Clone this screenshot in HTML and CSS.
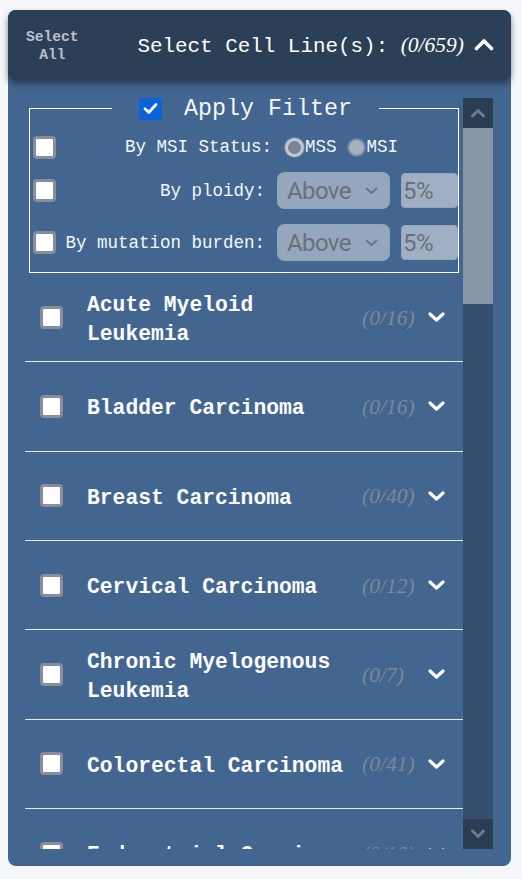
FILE: index.html
```html
<!DOCTYPE html>
<html>
<head>
<meta charset="utf-8">
<link rel="stylesheet" href="styles.css">
</head>
<body>
<div class="card">
  <div class="head">
    <div class="select-all">Select<br>All</div>
    <div class="title">Select Cell Line(s): <i class="total">(0/659)</i></div>
    <svg class="chev-up" width="20" height="14" viewBox="0 0 20 14"><path d="M2.5 11.5 L10 4 L17.5 11.5" fill="none" stroke="#fff" stroke-width="3.6" stroke-linecap="round" stroke-linejoin="round"/></svg>
  </div>
  <div class="body">
    <div class="scroller">
      <div class="content">
        <fieldset class="filter">
          <legend class="legend">
            <span class="cb checked"><svg width="17" height="17" viewBox="0 0 17 17"><path d="M3 8.8 L6.8 12.5 L14 4.5" fill="none" stroke="#fff" stroke-width="2.8" stroke-linecap="round" stroke-linejoin="round"/></svg></span>
            <span class="legend-text">Apply Filter</span>
          </legend>
          <div class="frow r1">
            <span class="cb"></span>
            <span class="flabel msi-label">By MSI Status:</span>
            <span class="controls">
              <span class="radio on"></span><span class="rtext">MSS</span>
              <span class="radio off"></span><span class="rtext">MSI</span>
            </span>
          </div>
          <div class="frow r2">
            <span class="cb"></span>
            <span class="flabel">By ploidy:</span>
            <span class="controls">
              <span class="sel">Above<svg width="13" height="8" viewBox="0 0 13 8"><path d="M1.5 1.5 L6.5 6 L11.5 1.5" fill="none" stroke="#6d7582" stroke-width="2" stroke-linecap="round" stroke-linejoin="round"/></svg></span>
              <span class="num">5%</span>
            </span>
          </div>
          <div class="frow r3">
            <span class="cb"></span>
            <span class="flabel">By mutation burden:</span>
            <span class="controls">
              <span class="sel">Above<svg width="13" height="8" viewBox="0 0 13 8"><path d="M1.5 1.5 L6.5 6 L11.5 1.5" fill="none" stroke="#6d7582" stroke-width="2" stroke-linecap="round" stroke-linejoin="round"/></svg></span>
              <span class="num">5%</span>
            </span>
          </div>
        </fieldset>

        <div class="cl-row"><span class="cb"></span><span class="name">Acute Myeloid Leukemia</span><i class="count">(0/16)</i><svg class="chev" width="17" height="12" viewBox="0 0 17 12"><path d="M2 3 L8.5 9 L15 3" fill="none" stroke="#fff" stroke-width="3.2" stroke-linecap="round" stroke-linejoin="round"/></svg></div>
        <div class="cl-row"><span class="cb"></span><span class="name">Bladder Carcinoma</span><i class="count">(0/16)</i><svg class="chev" width="17" height="12" viewBox="0 0 17 12"><path d="M2 3 L8.5 9 L15 3" fill="none" stroke="#fff" stroke-width="3.2" stroke-linecap="round" stroke-linejoin="round"/></svg></div>
        <div class="cl-row"><span class="cb"></span><span class="name">Breast Carcinoma</span><i class="count">(0/40)</i><svg class="chev" width="17" height="12" viewBox="0 0 17 12"><path d="M2 3 L8.5 9 L15 3" fill="none" stroke="#fff" stroke-width="3.2" stroke-linecap="round" stroke-linejoin="round"/></svg></div>
        <div class="cl-row"><span class="cb"></span><span class="name">Cervical Carcinoma</span><i class="count">(0/12)</i><svg class="chev" width="17" height="12" viewBox="0 0 17 12"><path d="M2 3 L8.5 9 L15 3" fill="none" stroke="#fff" stroke-width="3.2" stroke-linecap="round" stroke-linejoin="round"/></svg></div>
        <div class="cl-row"><span class="cb"></span><span class="name">Chronic Myelogenous Leukemia</span><i class="count">(0/7)</i><svg class="chev" width="17" height="12" viewBox="0 0 17 12"><path d="M2 3 L8.5 9 L15 3" fill="none" stroke="#fff" stroke-width="3.2" stroke-linecap="round" stroke-linejoin="round"/></svg></div>
        <div class="cl-row"><span class="cb"></span><span class="name">Colorectal Carcinoma</span><i class="count">(0/41)</i><svg class="chev" width="17" height="12" viewBox="0 0 17 12"><path d="M2 3 L8.5 9 L15 3" fill="none" stroke="#fff" stroke-width="3.2" stroke-linecap="round" stroke-linejoin="round"/></svg></div>
        <div class="cl-row"><span class="cb"></span><span class="name">Endometrial Carcinoma</span><i class="count">(0/10)</i><svg class="chev" width="17" height="12" viewBox="0 0 17 12"><path d="M2 3 L8.5 9 L15 3" fill="none" stroke="#fff" stroke-width="3.2" stroke-linecap="round" stroke-linejoin="round"/></svg></div>
      </div>
      <div class="scrollbar">
        <div class="sb-btn"><svg width="16" height="12" viewBox="0 0 16 12"><path d="M2.5 9 L8 3.5 L13.5 9" fill="none" stroke="#6b7d92" stroke-width="3" stroke-linecap="round" stroke-linejoin="round"/></svg></div>
        <div class="sb-thumb"></div>
        <div class="sb-track"></div>
        <div class="sb-btn"><svg width="16" height="12" viewBox="0 0 16 12"><path d="M2.5 3 L8 8.5 L13.5 3" fill="none" stroke="#6b7d92" stroke-width="3" stroke-linecap="round" stroke-linejoin="round"/></svg></div>
      </div>
    </div>
  </div>
</div>
</body>
</html>
```

FILE: styles.css
```css
* { box-sizing: border-box; }
html, body { margin: 0; padding: 0; }
body {
  background: #f5f7fa;
  font-family: "Liberation Mono", monospace;
  color: #fff;
}
.card {
  margin: 10px 0 0 8px;
  width: 503px;
  height: 856px;
  background: #436690;
  border-radius: 8px;
  display: flex;
  flex-direction: column;
}
.head {
  position: relative;
  z-index: 2;
  height: 70px;
  flex: none;
  background: #2b3f56;
  border-radius: 8px;
  box-shadow: 0 4px 6px rgba(20, 30, 45, 0.55);
  display: flex;
  align-items: center;
  padding: 0 17px 0 18px;
}
.select-all {
  font-size: 14.6px;
  line-height: 18px;
  color: #b9c1ca;
  text-align: center;
  font-weight: bold;
  margin-top: 1px;
}
.title {
  margin-left: auto;
  font-size: 20.9px;
  line-height: 26px;
  white-space: nowrap;
  margin-top: 2px;
}
.total {
  font-family: "Liberation Serif", serif;
  font-size: 21.5px;
}
.chev-up { margin-left: 10px; margin-top: -2px; }

.body {
  flex: 1;
  min-height: 0;
  padding: 18px 18px 17px 17px;
  display: flex;
}
.scroller {
  flex: 1;
  display: flex;
  min-height: 0;
  min-width: 0;
}
.content {
  flex: 1;
  min-width: 0;
  overflow: hidden;
}
.scrollbar {
  width: 30px;
  flex: none;
  display: flex;
  flex-direction: column;
}
.sb-btn {
  height: 30px;
  background: #2b3d53;
  display: flex;
  align-items: center;
  justify-content: center;
}
.sb-thumb { height: 176px; background: #8797a8; }
.sb-track { flex: 1; background: #35506f; }

/* filter */
.filter {
  margin: -1px 4px 0 4px;
  border: 1px solid #fff;
  padding: 0 0 11px 3px;
  min-width: 0;
}
.legend {
  margin: 0 auto;
  padding: 0 27px;
  display: flex;
  align-items: center;
  height: 23px;
}
.legend-text {
  font-size: 23.3px;
  line-height: 28px;
  margin-left: 22px;
  color: #f4f6f9;
}
.cb {
  width: 23px;
  height: 23px;
  flex: none;
  background: #fff;
  border: 3px solid #8a8c9a;
  border-radius: 4px;
  display: inline-block;
}
.cb.checked {
  background: #0b63d9;
  border: none;
  border-radius: 3px;
  display: inline-flex;
  align-items: center;
  justify-content: center;
}
.frow {
  display: grid;
  grid-template-columns: 23px minmax(0, 1fr) 181px;
  column-gap: 12px;
  align-items: center;
}
.r1 { margin-top: 15px; height: 24px; }
.r2 { margin-top: 13px; height: 37px; }
.r3 { margin-top: 15px; height: 37px; }
.flabel {
  font-size: 17.5px;
  text-align: right;
  white-space: nowrap;
  color: #f4f6f9;
}
.r3 .flabel { margin-left: -4px; }
.msi-label { margin-right: -7px; }
.controls {
  display: flex;
  align-items: center;
}
.radio {
  width: 19px;
  height: 19px;
  border-radius: 50%;
  flex: none;
}
.radio.on {
  margin-left: 8px;
  background: #7b8494;
  border: 3px solid #c0c8d4;
  box-shadow: 0 0 0 1px #6d82a0;
}
.radio.off {
  margin-left: 11px;
  background: #a4b1c3;
  border: 2px solid #6f849f;
}
.rtext {
  font-size: 17.5px;
  margin-left: 1px;
  color: #f4f6f9;
}
.rtext + .radio.off { margin-left: 10px; }
.sel {
  width: 113px;
  height: 37px;
  background: #94a7be;
  border: 1px solid #8ea2ba;
  border-radius: 7px;
  display: flex;
  align-items: center;
  justify-content: space-between;
  padding: 0 11px 0 9px;
  font-family: "Roboto", "Liberation Sans", sans-serif;
  font-size: 24px;
  letter-spacing: -0.6px;
  color: #6b7078;
}
.num {
  margin-left: 11px;
  width: 57px;
  height: 35px;
  background: #9fb0c5;
  border: 1px solid #93a6bd;
  border-radius: 4px;
  display: flex;
  align-items: center;
  padding-left: 1px;
  font-family: "Roboto", "Liberation Sans", sans-serif;
  font-size: 24px;
  letter-spacing: -0.6px;
  color: #6b7078;
}

/* list */
.cl-row {
  height: 89.33px;
  border-bottom: 1px solid #e8edf3;
  display: flex;
  align-items: center;
  padding: 0 18px 0 15px;
}
.cl-row .cb { margin-right: 24px; }
.name {
  flex: 1;
  min-width: 0;
  font-size: 21.33px;
  font-weight: bold;
  line-height: 29px;
  padding-top: 5px;
  color: #fbfcfd;
}
.count {
  width: 58px;
  flex: none;
  font-family: "Liberation Serif", serif;
  font-size: 21.5px;
  color: #7b8899;
  margin-top: 2px;
}
.chev { margin-left: 8px; flex: none; }
```
